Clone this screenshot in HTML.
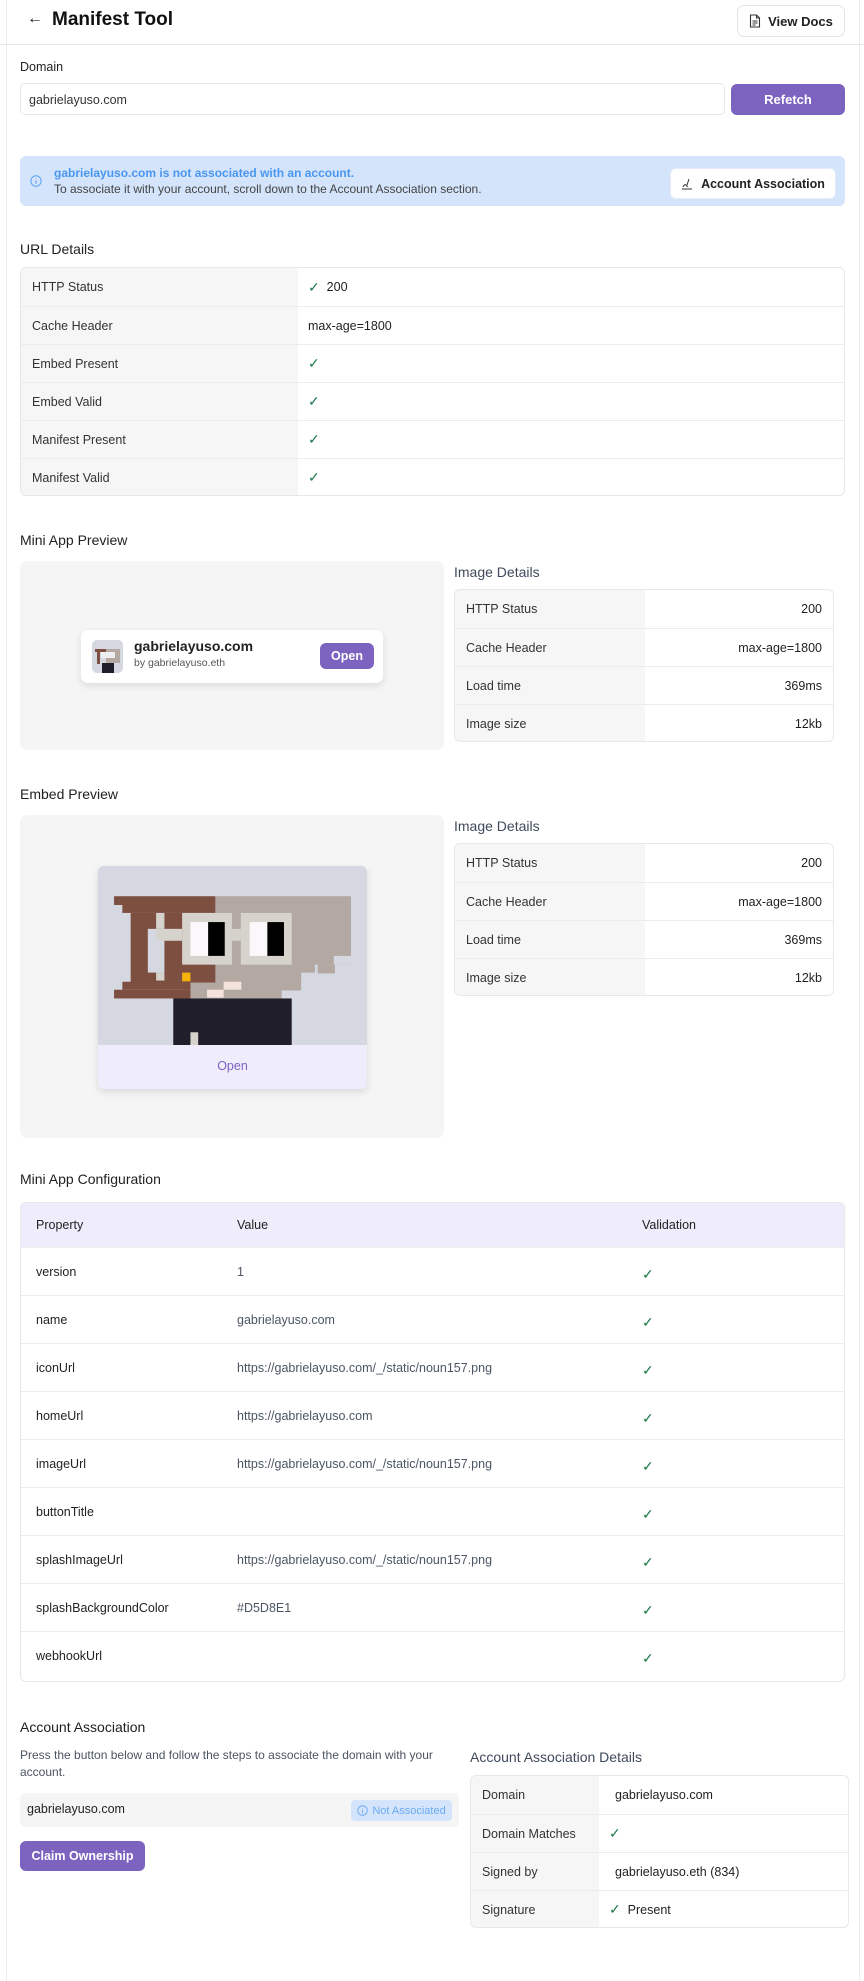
<!DOCTYPE html>
<html><head><meta charset="utf-8">
<style>
*{box-sizing:border-box;margin:0;padding:0}
body{width:864px;height:1981px;background:#fff;font-family:"Liberation Sans",sans-serif;color:#1f1f1f;position:relative;overflow:hidden}
.a{position:absolute}
.frame{left:6px;top:0;width:854px;height:1981px;border-left:1px solid #ececec;border-right:1px solid #ececec}
.h{font-size:14px;color:#1f1f1f}
table{border-collapse:collapse;width:100%}
.kv{position:absolute;border:1px solid #e8e8e8;border-radius:6px;overflow:hidden;background:#fff}
.kv .r{display:flex;border-top:1px solid #ececec;height:38px;align-items:center;font-size:12.5px}
.kv .r:first-child{border-top:none}
.kv .l{background:#f6f6f6;height:100%;display:flex;align-items:center;padding-left:11px;color:#333}
.kv .v{padding-left:10px;display:flex;align-items:center;height:100%;flex:1}
.ck{color:#1e7a4a;font-size:14px}
.btnp{background:#7c63bf;color:#fff;font-weight:bold;font-size:13px;border-radius:6px;display:flex;align-items:center;justify-content:center}
.cfg .row{display:flex;height:48px;border-top:1px solid #ececec;align-items:center;font-size:12.5px}
.cfg .c1{width:216px;padding-left:15px;color:#222}
.cfg .c2{width:405px;color:#4b5563}
.cfg .c3{color:#1e7a4a;font-size:14px;padding-top:6px}
</style></head><body>
<div class="a frame"></div>
<!-- header -->
<div class="a" style="left:0;top:44px;width:864px;border-top:1px solid #e8e8e8"></div>
<div class="a" style="left:27px;top:10px;font-size:16px">&#8592;</div>
<div class="a" style="left:52px;top:9px;font-size:19px;font-weight:bold;color:#111">Manifest Tool</div>
<div class="a" style="left:737px;top:5px;width:108px;height:32px;border:1px solid #e5e5e5;border-radius:7px;display:flex;align-items:center;justify-content:center;font-size:13px;font-weight:bold;color:#222">
<svg width="12" height="14" viewBox="0 0 12 14" style="margin-right:7px"><path d="M1.5 1h6l3 3v9h-9z M7.5 1v3h3 M3.5 7h5 M3.5 9h5 M3.5 11h3" fill="none" stroke="#333" stroke-width="1.1"/></svg>View Docs</div>
<!-- domain -->
<div class="a" style="left:20px;top:60px;font-size:12.5px;color:#222">Domain</div>
<div class="a" style="left:20px;top:83px;width:705px;height:32px;border:1px solid #e8e8e8;border-radius:5px;font-size:12.5px;padding:9px 8px;color:#333">gabrielayuso.com</div>
<div class="a btnp" style="left:731px;top:84px;width:114px;height:31px">Refetch</div>
<!-- alert -->
<div class="a" style="left:20px;top:156px;width:825px;height:50px;background:#d4e4fb;border-radius:6px"></div>
<svg class="a" style="left:30px;top:175px" width="12" height="12" viewBox="0 0 12 12"><circle cx="6" cy="6" r="5.2" fill="none" stroke="#5aa0f0" stroke-width="1"/><path d="M6 5.3v3.4M6 3.4v.6" stroke="#5aa0f0" stroke-width="1"/></svg>
<div class="a" style="left:54px;top:166px;font-size:12px;font-weight:bold;color:#4b97ee">gabrielayuso.com is not associated with an account.</div>
<div class="a" style="left:54px;top:182px;font-size:12px;color:#444">To associate it with your account, scroll down to the Account Association section.</div>
<div class="a" style="left:670px;top:168px;width:166px;height:31px;background:#fff;border-radius:6px;border:1px solid #e5ecf7;display:flex;align-items:center;justify-content:center;font-size:12.5px;font-weight:bold;color:#222">
<svg width="12" height="12" viewBox="0 0 12 12" style="margin-right:8px"><path d="M1 11h10M2 9c1-2 2-3 3-2s1 2 2 1M6 7l2-6" fill="none" stroke="#333" stroke-width="1"/></svg>Account Association</div>
<!-- URL details -->
<div class="a h" style="left:20px;top:241px">URL Details</div>
<div class="kv" style="left:20px;top:267px;width:825px;height:229px">
<div class="r"><div class="l" style="width:277px">HTTP Status</div><div class="v"><span class="ck">&#10003;</span>&nbsp;&nbsp;200</div></div>
<div class="r"><div class="l" style="width:277px">Cache Header</div><div class="v">max-age=1800</div></div>
<div class="r"><div class="l" style="width:277px">Embed Present</div><div class="v"><span class="ck">&#10003;</span></div></div>
<div class="r"><div class="l" style="width:277px">Embed Valid</div><div class="v"><span class="ck">&#10003;</span></div></div>
<div class="r"><div class="l" style="width:277px">Manifest Present</div><div class="v"><span class="ck">&#10003;</span></div></div>
<div class="r"><div class="l" style="width:277px">Manifest Valid</div><div class="v"><span class="ck">&#10003;</span></div></div>
</div>
<!-- mini app preview -->
<div class="a h" style="left:20px;top:532px">Mini App Preview</div>
<div class="a" style="left:20px;top:561px;width:424px;height:189px;background:#f5f5f5;border-radius:7px"></div>
<div class="a" style="left:81px;top:630px;width:302px;height:53px;background:#fff;border-radius:7px;box-shadow:0 3px 8px rgba(0,0,0,.1)"></div>
<div class="a" style="left:92px;top:640px;width:31px;height:33px;border-radius:5px;background:#d5d8e1;overflow:hidden">
<div class="a" style="left:3px;top:9px;width:12px;height:3px;background:#7d4f41"></div><div class="a" style="left:5px;top:12px;width:3px;height:12px;background:#7d4f41"></div><div class="a" style="left:14px;top:9px;width:14px;height:14px;background:#b3a8a2"></div><div class="a" style="left:9px;top:12px;width:14px;height:6px;background:#eee"></div><div class="a" style="left:10px;top:23px;width:12px;height:10px;background:#201e2b"></div></div>
<div class="a" style="left:134px;top:638px;font-size:14px;font-weight:bold;color:#222">gabrielayuso.com</div>
<div class="a" style="left:134px;top:657px;font-size:10.5px;color:#555">by gabrielayuso.eth</div>
<div class="a btnp" style="left:320px;top:643px;width:54px;height:26px;font-size:12.5px">Open</div>
<div class="a" style="left:454px;top:564px;font-size:14px;color:#3f4a5c">Image Details</div>
<div class="kv" style="left:454px;top:589px;width:380px;height:153px">
<div class="r"><div class="l" style="width:190px">HTTP Status</div><div class="v" style="justify-content:flex-end;padding-right:11px">200</div></div>
<div class="r"><div class="l" style="width:190px">Cache Header</div><div class="v" style="justify-content:flex-end;padding-right:11px">max-age=1800</div></div>
<div class="r"><div class="l" style="width:190px">Load time</div><div class="v" style="justify-content:flex-end;padding-right:11px">369ms</div></div>
<div class="r"><div class="l" style="width:190px">Image size</div><div class="v" style="justify-content:flex-end;padding-right:11px">12kb</div></div>
</div>
<!-- embed preview -->
<div class="a h" style="left:20px;top:786px">Embed Preview</div>
<div class="a" style="left:20px;top:815px;width:424px;height:323px;background:#f5f5f5;border-radius:7px"></div>
<div class="a" style="left:98px;top:866px;width:269px;height:223px;border-radius:6px;overflow:hidden;box-shadow:0 3px 8px rgba(0,0,0,.12);background:#efecfc">
<svg width="269" height="179" viewBox="178 872 486 450" preserveAspectRatio="none" style="display:block">
<rect x="178" y="872" width="486" height="450" fill="#d5d8e1"/>
<rect x="390" y="948" width="245" height="172" fill="#b3a8a2"/>
<rect x="330" y="1098" width="274" height="22" fill="#b3a8a2"/>
<rect x="330" y="1120" width="240" height="20" fill="#b3a8a2"/>
<rect x="330" y="1140" width="215" height="45" fill="#b3a8a2"/>
<rect x="330" y="1183" width="180" height="22" fill="#b3a8a2"/>
<rect x="604" y="1098" width="31" height="22" fill="#d5d8e1"/>
<rect x="575" y="1120" width="31" height="22" fill="#b3a8a2"/>
<rect x="207" y="948" width="183" height="22" fill="#7d4f41"/>
<rect x="222" y="968" width="168" height="22" fill="#7d4f41"/>
<rect x="237" y="990" width="153" height="175" fill="#7d4f41"/>
<rect x="222" y="1163" width="123" height="20" fill="#7d4f41"/>
<rect x="207" y="1183" width="138" height="22" fill="#7d4f41"/>
<rect x="268" y="1030" width="30" height="110" fill="#d5d8e1"/>
<rect x="283" y="990" width="15" height="40" fill="#d6d3cd"/>
<rect x="283" y="1030" width="47" height="30" fill="#d6d3cd"/>
<rect x="283" y="1140" width="15" height="20" fill="#d6d3cd"/>
<rect x="330" y="990" width="90" height="130" fill="#d6d3cd"/>
<rect x="436" y="990" width="92" height="130" fill="#d6d3cd"/>
<rect x="420" y="1030" width="16" height="30" fill="#d6d3cd"/>
<rect x="345" y="1013" width="32" height="85" fill="#fbf8fb"/>
<rect x="377" y="1013" width="30" height="85" fill="#000"/>
<rect x="452" y="1013" width="32" height="85" fill="#fbf8fb"/>
<rect x="484" y="1013" width="30" height="85" fill="#000"/>
<rect x="330" y="1140" width="15" height="22" fill="#f5b30a"/>
<rect x="405" y="1163" width="32" height="20" fill="#f3e3dc"/>
<rect x="375" y="1183" width="30" height="20" fill="#f3e3dc"/>
<rect x="314" y="1205" width="214" height="117" fill="#201e2b"/>
<rect x="345" y="1290" width="14" height="32" fill="#d6d3cd"/>
</svg>
<div style="text-align:center;font-size:12.5px;color:#7c63bf;padding-top:14px">Open</div>
</div>
<div class="a" style="left:454px;top:818px;font-size:14px;color:#3f4a5c">Image Details</div>
<div class="kv" style="left:454px;top:843px;width:380px;height:153px">
<div class="r"><div class="l" style="width:190px">HTTP Status</div><div class="v" style="justify-content:flex-end;padding-right:11px">200</div></div>
<div class="r"><div class="l" style="width:190px">Cache Header</div><div class="v" style="justify-content:flex-end;padding-right:11px">max-age=1800</div></div>
<div class="r"><div class="l" style="width:190px">Load time</div><div class="v" style="justify-content:flex-end;padding-right:11px">369ms</div></div>
<div class="r"><div class="l" style="width:190px">Image size</div><div class="v" style="justify-content:flex-end;padding-right:11px">12kb</div></div>
</div>
<!-- config -->
<div class="a h" style="left:20px;top:1171px">Mini App Configuration</div>
<div class="a cfg" style="left:20px;top:1202px;width:825px;height:480px;border:1px solid #e8e8e8;border-radius:6px;overflow:hidden">
<div class="row" style="height:44px;background:#efedfc;border-top:none"><div class="c1">Property</div><div class="c2" style="color:#222">Value</div><div style="font-size:12.5px">Validation</div></div>
<div class="row"><div class="c1">version</div><div class="c2">1</div><div class="c3">&#10003;</div></div>
<div class="row"><div class="c1">name</div><div class="c2">gabrielayuso.com</div><div class="c3">&#10003;</div></div>
<div class="row"><div class="c1">iconUrl</div><div class="c2">https://gabrielayuso.com/_/static/noun157.png</div><div class="c3">&#10003;</div></div>
<div class="row"><div class="c1">homeUrl</div><div class="c2">https://gabrielayuso.com</div><div class="c3">&#10003;</div></div>
<div class="row"><div class="c1">imageUrl</div><div class="c2">https://gabrielayuso.com/_/static/noun157.png</div><div class="c3">&#10003;</div></div>
<div class="row"><div class="c1">buttonTitle</div><div class="c2"></div><div class="c3">&#10003;</div></div>
<div class="row"><div class="c1">splashImageUrl</div><div class="c2">https://gabrielayuso.com/_/static/noun157.png</div><div class="c3">&#10003;</div></div>
<div class="row"><div class="c1">splashBackgroundColor</div><div class="c2">#D5D8E1</div><div class="c3">&#10003;</div></div>
<div class="row"><div class="c1">webhookUrl</div><div class="c2"></div><div class="c3">&#10003;</div></div>
</div>
<!-- account association -->
<div class="a h" style="left:20px;top:1719px">Account Association</div>
<div class="a" style="left:20px;top:1747px;width:440px;font-size:12px;line-height:17px;color:#4b5563">Press the button below and follow the steps to associate the domain with your account.</div>
<div class="a" style="left:20px;top:1793px;width:439px;height:34px;background:#f5f5f5;border-radius:6px"></div>
<div class="a" style="left:27px;top:1802px;font-size:12.5px;color:#222">gabrielayuso.com</div>
<div class="a" style="left:351px;top:1800px;width:101px;height:21px;background:#d4e4fb;border-radius:4px;font-size:11px;color:#6aaaf2;display:flex;align-items:center;justify-content:center">
<svg width="11" height="11" viewBox="0 0 12 12" style="margin-right:4px"><circle cx="6" cy="6" r="5.2" fill="none" stroke="#6aaaf2" stroke-width="1"/><path d="M6 5.3v3.4M6 3.4v.6" stroke="#6aaaf2" stroke-width="1"/></svg>Not Associated</div>
<div class="a btnp" style="left:20px;top:1841px;width:125px;height:30px;font-size:12.5px">Claim Ownership</div>
<div class="a" style="left:470px;top:1749px;font-size:14px;color:#3f4a5c">Account Association Details</div>
<div class="kv" style="left:470px;top:1775px;width:379px;height:153px">
<div class="r"><div class="l" style="width:128px">Domain</div><div class="v" style="padding-left:16px">gabrielayuso.com</div></div>
<div class="r"><div class="l" style="width:128px">Domain Matches</div><div class="v"><span class="ck">&#10003;</span></div></div>
<div class="r"><div class="l" style="width:128px">Signed by</div><div class="v" style="padding-left:16px">gabrielayuso.eth (834)</div></div>
<div class="r"><div class="l" style="width:128px">Signature</div><div class="v"><span class="ck">&#10003;</span>&nbsp;&nbsp;Present</div></div>
</div>
</body></html>
